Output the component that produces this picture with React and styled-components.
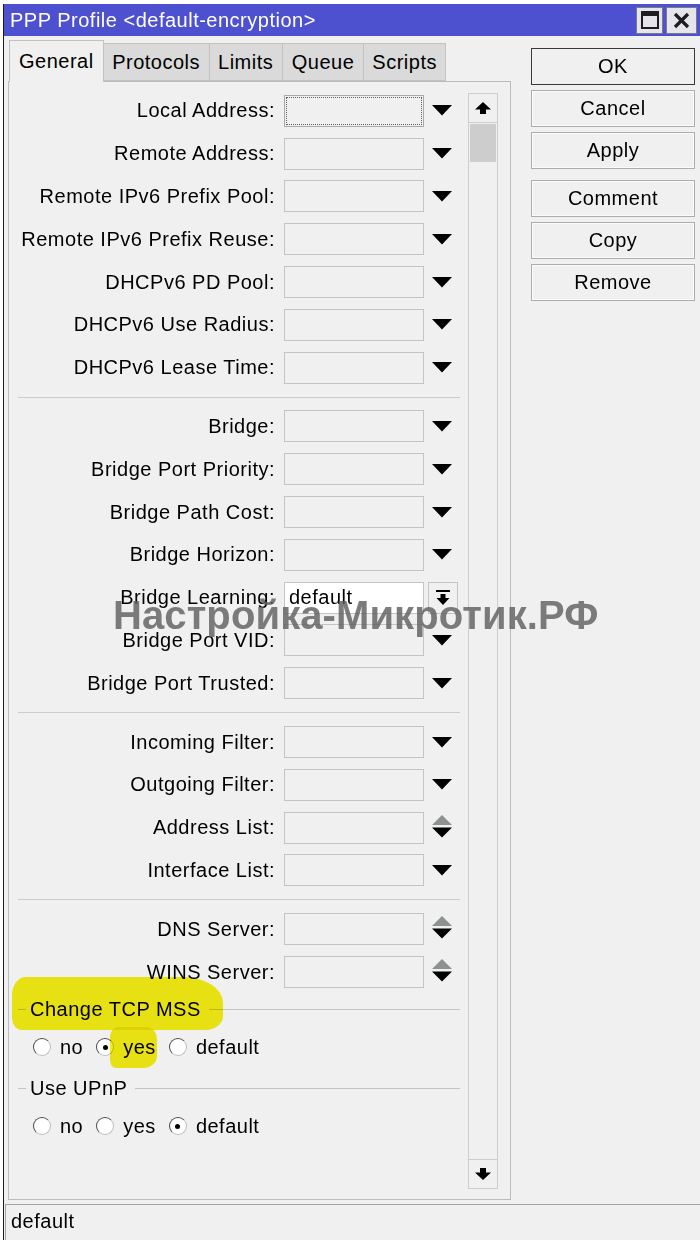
import React from 'react';
import styled, { createGlobalStyle } from 'styled-components';

const GlobalStyle = createGlobalStyle`
  html, body { margin: 0; padding: 0; background: #ffffff; }
  body { font-family: "Liberation Sans", Arial, sans-serif; color: #000; }
  * { box-sizing: border-box; }
`;

const Window = styled.div`
  position: relative;
  margin: 4px 0 0 3px;
  width: 697px;
  height: 1236px;
  background: #f0f0f0;
  border-left: 1px solid #1c1c1c;
  display: flex;
  flex-direction: column;
  overflow: hidden;
  font-size: 20px;
  letter-spacing: 0.5px;
`;

const TitleBar = styled.div`
  height: 32px;
  flex: none;
  background: #4d50cf;
  color: #ffffff;
  display: flex;
  align-items: center;
  padding: 0 3px 0 6px;
  font-size: 20px;
`;

const TitleText = styled.div`
  flex: 1;
  white-space: nowrap;
`;

const WinButtons = styled.div`
  display: flex;
  gap: 3px;
`;

const WinButton = styled.div`
  width: ${p => p.$w}px;
  height: 27px;
  background: #e6e6ea;
  border: 1px solid #7a7a8a;
  display: flex;
  align-items: center;
  justify-content: center;
`;

const Body = styled.div`
  display: flex;
  padding-left: 4px;
  flex: none;
`;

const Main = styled.div`
  width: 503px;
  display: flex;
  flex-direction: column;
`;

const TabRow = styled.div`
  display: flex;
  align-items: flex-end;
  margin: 3px 0 0 1px;
  height: 42px;
  position: relative;
  z-index: 1;
`;

const Tab = styled.div`
  height: ${p => (p.$active ? 42 : 38)}px;
  margin-bottom: ${p => (p.$active ? -1 : 0)}px;
  padding: 0 ${p => p.$pad}px;
  display: flex;
  align-items: center;
  background: ${p => (p.$active ? '#f0f0f0' : '#dadada')};
  border: 1px solid #c2c2c2;
  border-bottom: ${p => (p.$active ? 'none' : '1px solid #c2c2c2')};
  border-left: ${p => (p.$first || p.$active ? '1px solid #c2c2c2' : 'none')};
  white-space: nowrap;
`;

const Panel = styled.div`
  height: 1119px;
  border: 1px solid #bcbcbc;
  display: flex;
  padding: 0 12px 0 0;
`;

const Form = styled.div`
  width: 459px;
  padding-top: 7.5px;
  display: flex;
  flex-direction: column;
`;

const Row = styled.div`
  height: 42.8px;
  display: flex;
  align-items: center;
  flex: none;
`;

const Label = styled.div`
  width: 266px;
  text-align: right;
  white-space: nowrap;
`;

const Field = styled.div`
  margin-left: 9px;
  width: 140px;
  height: 32px;
  border: 1px solid ${p => (p.$focus ? '#a9a9a9' : '#c4c4c4')};
  background: ${p => (p.$white ? '#ffffff' : '#f0f0f0')};
  padding: 0 4px;
  display: flex;
  align-items: center;
  outline: ${p => (p.$focus ? '1px dotted #606060' : 'none')};
  outline-offset: -3px;
`;

const ArrowCell = styled.div`
  width: 36px;
  display: flex;
  align-items: center;
  justify-content: ${p => (p.$button ? 'flex-start' : 'center')};
`;

const DropButton = styled.div`
  margin-left: 4px;
  width: 30px;
  height: 32px;
  border: 1px solid #c4c4c4;
  background: #f0f0f0;
  display: flex;
  align-items: center;
  justify-content: center;
`;

const Separator = styled.div`
  height: 1px;
  flex: none;
  margin: 7.5px 8px 7.5px 9px;
  background: #cbcbcb;
`;

const Legend = styled.div`
  height: 32px;
  display: flex;
  align-items: center;
`;

const LegendDash = styled.div`
  width: 8px;
  height: 1px;
  margin-left: 9px;
  background: #c4c4c4;
`;

const LegendLine = styled.div`
  flex: 1;
  height: 1px;
  margin: 0 8px 0 8px;
  background: #c4c4c4;
`;

const Marked = styled.span`
  position: relative;
  &::after {
    content: '';
    position: absolute;
    left: ${p => p.$l}px;
    right: ${p => p.$r}px;
    top: ${p => p.$t}px;
    bottom: ${p => p.$b}px;
    background: #f6ee14;
    mix-blend-mode: multiply;
    border-radius: ${p => p.$radius};
    pointer-events: none;
  }
`;

const LegendText = styled.span`
  margin-left: 4px;
  white-space: nowrap;
`;

const RadioRow = styled.div`
  height: 36px;
  margin: 4px 0 7px 0;
  padding-left: 24px;
  display: flex;
  align-items: center;
`;

const RadioItem = styled.div`
  display: flex;
  align-items: center;
  margin-right: 13px;
`;

const Circle = styled.div`
  width: 18px;
  height: 18px;
  border-radius: 50%;
  background: #ffffff;
  border: 1px solid;
  border-color: #4a4a4a #bdbdbd #bdbdbd #4a4a4a;
  display: flex;
  align-items: center;
  justify-content: center;
  &::before {
    content: '';
    display: ${p => (p.$checked ? 'block' : 'none')};
    width: 5px;
    height: 5px;
    border-radius: 50%;
    background: #000;
  }
`;

const RadioLabel = styled.span`
  margin-left: 9px;
`;

const ScrollBar = styled.div`
  width: 30px;
  margin: 11px 0 10px 0;
  border: 1px solid #cdcdcd;
  display: flex;
  flex-direction: column;
  background: #f0f0f0;
`;

const ScrollButton = styled.div`
  height: 29px;
  flex: none;
  display: flex;
  align-items: center;
  justify-content: center;
  border-${p => (p.$down ? 'top' : 'bottom')}: 1px solid #cdcdcd;
`;

const Thumb = styled.div`
  height: 38px;
  flex: none;
  margin: 1px 1px 0 1px;
  background: #cdcdcd;
`;

const Spacer = styled.div`
  flex: 1;
`;

const Side = styled.div`
  margin-left: 20px;
  padding-top: 12px;
  width: 164px;
  display: flex;
  flex-direction: column;
  gap: 5px;
`;

const Button = styled.div`
  height: 37px;
  border: 1px solid ${p => (p.$default ? '#3a3a3a' : '#adadad')};
  background: #f0f0f0;
  display: flex;
  align-items: center;
  justify-content: center;
  margin-top: ${p => p.$mt || 0}px;
  box-shadow: inset 0 0 0 1px ${p => (p.$default ? '#f0f0f0' : '#fbfbfb')};
`;

const StatusBar = styled.div`
  margin: 4px 0 0 1px;
  flex: 1;
  border-top: 1px solid #a4a4a4;
  border-left: 1px solid #a4a4a4;
  padding-left: 5px;
  display: flex;
  align-items: center;
  padding-bottom: 2px;
`;

const Watermark = styled.div`
  position: absolute;
  left: 109px;
  top: 591px;
  font-size: 40px;
  font-weight: bold;
  letter-spacing: 0.1px;
  line-height: 40px;
  color: rgba(95, 95, 95, 0.82);
  white-space: nowrap;
  pointer-events: none;
`;

const DownIcon = () => (
  <svg width="20" height="11" viewBox="0 0 20 11">
    <polygon points="0,0 20,0 10,10.5" fill="#000" />
  </svg>
);

const UpDownIcon = () => (
  <svg width="22" height="26" viewBox="0 0 22 26">
    <polygon points="11,0 21,10 1,10" fill="#8e928e" />
    <polygon points="1,12.5 21,12.5 11,22.5" fill="#000" />
  </svg>
);

const DropIcon = () => (
  <svg width="16" height="16" viewBox="0 0 16 16">
    <rect x="1" y="0" width="14" height="2" fill="#000" />
    <polygon points="5.5,4 10.5,4 10.5,8 14.5,8 8,15 1.5,8 5.5,8" fill="#000" />
  </svg>
);

const ScrollArrow = ({ down }) => (
  <svg width="16" height="12" viewBox="0 0 16 12" style={down ? { transform: 'rotate(180deg)' } : undefined}>
    <polygon points="8,0 16,7.5 11,7.5 11,12 5,12 5,7.5 0,7.5" fill="#000" />
  </svg>
);

const MaxIcon = () => (
  <svg width="18" height="18" viewBox="0 0 18 18">
    <rect x="1" y="1" width="16" height="16" fill="none" stroke="#1e1e1e" strokeWidth="2" />
    <rect x="1" y="1" width="16" height="4" fill="#1e1e1e" />
  </svg>
);

const CloseIcon = () => (
  <svg width="17" height="17" viewBox="0 0 17 17">
    <path d="M2 2 L15 15 M15 2 L2 15" stroke="#1e1e1e" strokeWidth="3.2" />
  </svg>
);

const groups = [
  [
    { label: 'Local Address:', icon: 'down', focus: true },
    { label: 'Remote Address:', icon: 'down' },
    { label: 'Remote IPv6 Prefix Pool:', icon: 'down' },
    { label: 'Remote IPv6 Prefix Reuse:', icon: 'down' },
    { label: 'DHCPv6 PD Pool:', icon: 'down' },
    { label: 'DHCPv6 Use Radius:', icon: 'down' },
    { label: 'DHCPv6 Lease Time:', icon: 'down' },
  ],
  [
    { label: 'Bridge:', icon: 'down' },
    { label: 'Bridge Port Priority:', icon: 'down' },
    { label: 'Bridge Path Cost:', icon: 'down' },
    { label: 'Bridge Horizon:', icon: 'down' },
    { label: 'Bridge Learning:', icon: 'button', value: 'default' },
    { label: 'Bridge Port VID:', icon: 'down' },
    { label: 'Bridge Port Trusted:', icon: 'down' },
  ],
  [
    { label: 'Incoming Filter:', icon: 'down' },
    { label: 'Outgoing Filter:', icon: 'down' },
    { label: 'Address List:', icon: 'updown' },
    { label: 'Interface List:', icon: 'down' },
  ],
  [
    { label: 'DNS Server:', icon: 'updown' },
    { label: 'WINS Server:', icon: 'updown' },
  ],
];

const tabs = [
  { name: 'General', pad: 9, active: true },
  { name: 'Protocols', pad: 8.5 },
  { name: 'Limits', pad: 8.5 },
  { name: 'Queue', pad: 9 },
  { name: 'Scripts', pad: 8 },
];

function FieldRow({ f }) {
  return (
    <Row>
      <Label>{f.label}</Label>
      <Field $focus={f.focus} $white={!!f.value}>{f.value}</Field>
      <ArrowCell $button={f.icon === 'button'}>
        {f.icon === 'down' && <DownIcon />}
        {f.icon === 'updown' && <UpDownIcon />}
        {f.icon === 'button' && (
          <DropButton>
            <DropIcon />
          </DropButton>
        )}
      </ArrowCell>
    </Row>
  );
}

function Radio({ label, checked, mark }) {
  return (
    <RadioItem>
      <Circle $checked={checked} />
      <RadioLabel>
        {mark ? (
          <Marked $l={-13} $r={-1} $t={-9} $b={-10} $radius="8px 10px 14px 6px / 10px 12px 12px 8px">
            {label}
          </Marked>
        ) : (
          label
        )}
      </RadioLabel>
    </RadioItem>
  );
}

export default function App() {
  return (
    <>
      <GlobalStyle />
      <Window>
        <TitleBar>
          <TitleText>PPP Profile &lt;default-encryption&gt;</TitleText>
          <WinButtons>
            <WinButton $w={27}>
              <MaxIcon />
            </WinButton>
            <WinButton $w={31}>
              <CloseIcon />
            </WinButton>
          </WinButtons>
        </TitleBar>
        <Body>
          <Main>
            <TabRow>
              {tabs.map((t, i) => (
                <Tab key={t.name} $active={t.active} $first={i === 0} $pad={t.pad}>
                  {t.name}
                </Tab>
              ))}
            </TabRow>
            <Panel>
              <Form>
                {groups.map((g, gi) => (
                  <React.Fragment key={gi}>
                    {gi > 0 && <Separator />}
                    {g.map(f => (
                      <FieldRow key={f.label} f={f} />
                    ))}
                  </React.Fragment>
                ))}
                <Legend>
                  <LegendDash />
                  <LegendText>
                    <Marked $l={-18} $r={-22} $t={-21} $b={-10} $radius="14px 40px 18px 10px / 18px 26px 14px 12px">
                      Change TCP MSS
                    </Marked>
                  </LegendText>
                  <LegendLine />
                </Legend>
                <RadioRow>
                  <Radio label="no" />
                  <Radio label="yes" checked mark />
                  <Radio label="default" />
                </RadioRow>
                <Legend>
                  <LegendDash />
                  <LegendText>Use UPnP</LegendText>
                  <LegendLine />
                </Legend>
                <RadioRow>
                  <Radio label="no" />
                  <Radio label="yes" />
                  <Radio label="default" checked />
                </RadioRow>
              </Form>
              <ScrollBar>
                <ScrollButton>
                  <ScrollArrow />
                </ScrollButton>
                <Thumb />
                <Spacer />
                <ScrollButton $down>
                  <ScrollArrow down />
                </ScrollButton>
              </ScrollBar>
            </Panel>
          </Main>
          <Side>
            <Button $default>OK</Button>
            <Button>Cancel</Button>
            <Button>Apply</Button>
            <Button $mt={6}>Comment</Button>
            <Button>Copy</Button>
            <Button>Remove</Button>
          </Side>
        </Body>
        <StatusBar>default</StatusBar>
        <Watermark>Настройка-Микротик.РФ</Watermark>
      </Window>
    </>
  );
}
